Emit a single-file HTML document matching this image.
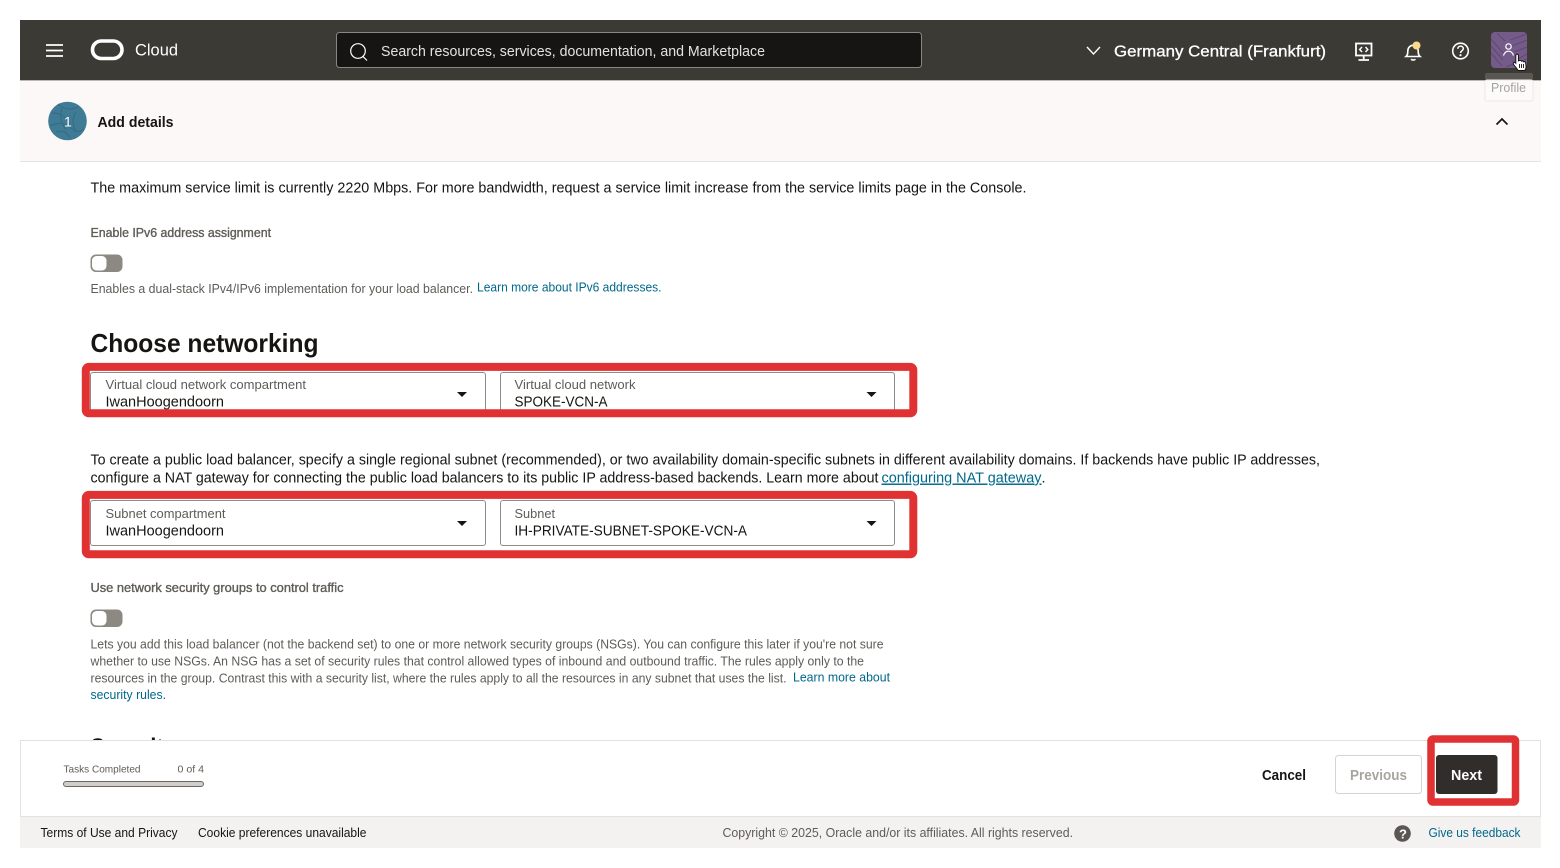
<!DOCTYPE html>
<html><head><meta charset="utf-8"><title>Add details</title>
<style>
html,body{margin:0;padding:0;background:#fff;width:1560px;height:868px;overflow:hidden}
svg{display:block}
text{font-family:"Liberation Sans",sans-serif;font-size:14px;fill:#161513}
.g{fill:#5f5c57}
.l{fill:#00688c}
.b{font-weight:700}
</style></head><body>
<svg width="1560" height="868" viewBox="0 0 1560 868" xmlns="http://www.w3.org/2000/svg">
<!-- header -->
<rect x="20" y="20" width="1521" height="60" fill="#3c3a35"/>
<rect x="20" y="80" width="1521" height="1" fill="#bdb8b3"/>
<g stroke="#fff" stroke-width="1.8"><path d="M46 45h17M46 50.500h17M46 56h17"/></g>
<rect x="92.500" y="41" width="29.500" height="17.500" rx="8.700" fill="none" stroke="#fff" stroke-width="3.600"/>
<text x="135" y="55.500" style="font-size:17px;fill:#fff" textLength="43" lengthAdjust="spacingAndGlyphs">Cloud</text>
<rect x="336.500" y="32.500" width="585" height="35" rx="3" fill="#161513" stroke="#8a8782"/>
<circle cx="358" cy="51" r="7.300" fill="none" stroke="#fff" stroke-width="1.200"/>
<path d="M363 56.500l4 4" stroke="#fff" stroke-width="1.200"/>
<text x="381" y="56" style="font-size:14.500px;fill:#e4e2df" textLength="384" lengthAdjust="spacingAndGlyphs">Search resources, services, documentation, and Marketplace</text>
<path d="M1087 47l6.500 7 6.500-7" fill="none" stroke="#fff" stroke-width="1.400"/>
<text x="1114" y="56.500" style="font-size:16px;fill:#fff;stroke:#fff;stroke-width:.3" textLength="212" lengthAdjust="spacingAndGlyphs">Germany Central (Frankfurt)</text>
<!-- console icon -->
<g fill="none" stroke="#fff" stroke-width="1.800">
<rect x="1356" y="43.500" width="15.500" height="12"/>
<path d="M1363.700 55.500v4.500M1358.500 60h10.500"/>
<path d="M1362 47l-2.300 2.500 2.300 2.500M1365.500 47l2.300 2.500-2.300 2.500" stroke-width="1.500"/>
<!-- bell -->
<path d="M1406 56.500c1.700-1.500 1.800-3 1.800-5.500 0-3.200 2.300-5.700 5.200-5.700s5.200 2.500 5.200 5.700c0 2.500.1 4 1.800 5.500z" stroke-width="1.600"/>
<path d="M1411 59.300c1.200 1 3.200 1 4.500 0" stroke-width="1.600"/>
<!-- help -->
<circle cx="1460.500" cy="51" r="7.800" stroke-width="1.600"/>
<path d="M1457.800 48.800c.2-3.500 5.500-3.500 5.500 0 0 2-2.800 2-2.800 4.200" stroke-width="1.500"/>
</g>
<circle cx="1460.500" cy="55.200" r="1.100" fill="#fff"/>
<circle cx="1416.500" cy="45.500" r="4" fill="#fbd98a"/>
<!-- profile -->
<rect x="1491" y="32" width="36" height="36" rx="4" fill="#755b8a"/>
<g fill="none" stroke="#604a74" stroke-width="1.100">
<path d="M1491 39l14 16M1491 46l12 14M1491 53l11 13M1497 33l8 8M1510 40l17-6M1512 46l15-6M1514 52l13-5M1512 62l15-8M1506 67l21-8"/>
</g>
<circle cx="1508.500" cy="46.500" r="2.700" fill="none" stroke="#fff" stroke-width="1.200"/>
<path d="M1503.500 55.500c1-3 3-4.300 5-4.300s4 1.300 5 4.300" fill="none" stroke="#fff" stroke-width="1.200"/>
<!-- tooltip top over header -->
<rect x="1485" y="73" width="48" height="7" rx="2" fill="#5a5753"/>
<!-- cursor -->
<path d="M1515.800 55.500c0-1.900 2.600-1.900 2.600 0v5.300l1.500-.4c1-.2 1.500.3 1.600.8.800-.4 1.800-.2 2 .6.900-.4 2-.1 2.100 1l.5 4c0 1.600-.6 2.600-1.300 3.700h-6.500l-4.700-6c-1-1.500.8-2.800 2.200-1.300z" fill="#fff" stroke="#161513" stroke-width="1"/>
<path d="M1519.500 64v4M1521.500 64v4M1523.500 64v4" stroke="#161513" stroke-width=".9"/>
<!-- step band -->
<rect x="20" y="81" width="1521" height="80" fill="#fcf8f7"/>
<rect x="1485" y="80" width="48" height="21" rx="2" fill="#fcfbfa" stroke="#ebe8e6"/>
<text x="1491" y="92" style="font-size:12.500px;fill:#a5a29e" textLength="35" lengthAdjust="spacingAndGlyphs">Profile</text>
<rect x="20" y="161" width="1521" height="1" fill="#e6e3e1"/>
<circle cx="67.500" cy="121" r="19.300" fill="#3f7b94"/>
<g fill="none" stroke="#346b83" stroke-width="1">
<path d="M52 113c8 0 14 3 18 12M58 104c6 6 14 6 20 3M50 126c6-3 12-4 18 0s10 8 16 3M62 108c-2 8-2 14 4 22M76 112c-4 6-4 12 0 20M56 132c6-2 10-1 14 6"/>
</g>
<text x="64" y="126.500" style="font-size:14px;fill:#fff">1</text>
<text x="97.500" y="127" class="b" style="font-size:14.500px" textLength="76" lengthAdjust="spacingAndGlyphs">Add details</text>
<path d="M1496.500 124.500l5.500-5.500 5.500 5.500" fill="none" stroke="#161513" stroke-width="1.700"/>

<!-- content -->
<text x="90.500" y="192.500" style="font-size:14.500px" textLength="936" lengthAdjust="spacingAndGlyphs">The maximum service limit is currently 2220 Mbps. For more bandwidth, request a service limit increase from the service limits page in the Console.</text>
<text x="90.500" y="237" class="g" style="font-size:12.500px;stroke:#5f5c57;stroke-width:.35" textLength="180.500" lengthAdjust="spacingAndGlyphs">Enable IPv6 address assignment</text>
<rect x="91" y="255" width="31" height="16.500" rx="5" fill="#8c8882" stroke="#8c8882"/>
<rect x="92" y="256" width="14.500" height="14.500" rx="4.500" fill="#fff"/>
<text x="90.500" y="293" class="g" style="font-size:12.500px" textLength="382.500" lengthAdjust="spacingAndGlyphs">Enables a dual-stack IPv4/IPv6 implementation for your load balancer.</text>
<text x="477" y="291.500" class="l" style="font-size:12.500px" textLength="184.500" lengthAdjust="spacingAndGlyphs">Learn more about IPv6 addresses.</text>
<text x="90.500" y="352" class="b" style="font-size:26px" textLength="228" lengthAdjust="spacingAndGlyphs">Choose networking</text>

<!-- first row fields -->
<g fill="#fff" stroke="#8f8c87">
<path d="M90.500 413V375a2.500 2.500 0 0 1 2.500-2.500H483a2.500 2.500 0 0 1 2.500 2.500V413"/>
<path d="M500.500 413V375a2.500 2.500 0 0 1 2.500-2.500H892a2.500 2.500 0 0 1 2.500 2.500V413"/>
</g>
<text x="105.500" y="389" class="g" style="font-size:12.500px" textLength="200.500" lengthAdjust="spacingAndGlyphs">Virtual cloud network compartment</text>
<text x="105.500" y="406.500" style="font-size:14.500px" textLength="118.500" lengthAdjust="spacingAndGlyphs">IwanHoogendoorn</text>
<path d="M457 392h10l-5 5z" fill="#161513"/>
<text x="514.500" y="389" class="g" style="font-size:12.500px" textLength="121" lengthAdjust="spacingAndGlyphs">Virtual cloud network</text>
<text x="514.500" y="406.500" style="font-size:14.500px" textLength="93" lengthAdjust="spacingAndGlyphs">SPOKE-VCN-A</text>
<path d="M866.500 392h10l-5 5z" fill="#161513"/>
<rect x="85.800" y="366.900" width="827.500" height="46.400" rx="3" fill="none" stroke="#e03232" stroke-width="8"/>

<text x="90.500" y="464.500" style="font-size:14.500px" textLength="1229.500" lengthAdjust="spacingAndGlyphs">To create a public load balancer, specify a single regional subnet (recommended), or two availability domain-specific subnets in different availability domains. If backends have public IP addresses,</text>
<text x="90.500" y="482.500" style="font-size:14.500px" textLength="788" lengthAdjust="spacingAndGlyphs">configure a NAT gateway for connecting the public load balancers to its public IP address-based backends. Learn more about</text>
<text x="881.500" y="482.500" class="l" style="font-size:14.500px;text-decoration:underline" textLength="160" lengthAdjust="spacingAndGlyphs">configuring NAT gateway</text>
<text x="1041.500" y="482.500" style="font-size:14.500px">.</text>

<!-- second row fields -->
<g fill="#fff" stroke="#8f8c87">
<rect x="90.500" y="500.500" width="395" height="45" rx="2.500"/>
<rect x="500.500" y="500.500" width="394" height="45" rx="2.500"/>
</g>
<text x="105.500" y="518" class="g" style="font-size:12.500px" textLength="120" lengthAdjust="spacingAndGlyphs">Subnet compartment</text>
<text x="105.500" y="535.500" style="font-size:14.500px" textLength="118.500" lengthAdjust="spacingAndGlyphs">IwanHoogendoorn</text>
<path d="M457 521h10l-5 5z" fill="#161513"/>
<text x="514.500" y="518" class="g" style="font-size:12.500px" textLength="40.500" lengthAdjust="spacingAndGlyphs">Subnet</text>
<text x="514.500" y="535.500" style="font-size:14.500px" textLength="232.500" lengthAdjust="spacingAndGlyphs">IH-PRIVATE-SUBNET-SPOKE-VCN-A</text>
<path d="M866.500 521h10l-5 5z" fill="#161513"/>
<rect x="85.800" y="494.900" width="827.500" height="59.400" rx="3" fill="none" stroke="#e03232" stroke-width="8"/>

<text x="90.500" y="592" class="g" style="font-size:12.500px;stroke:#5f5c57;stroke-width:.35" textLength="253" lengthAdjust="spacingAndGlyphs">Use network security groups to control traffic</text>
<rect x="91" y="610" width="31" height="16.500" rx="5" fill="#8c8882" stroke="#8c8882"/>
<rect x="92" y="611" width="14.500" height="14.500" rx="4.500" fill="#fff"/>
<text x="90.500" y="648.500" class="g" style="font-size:12.500px" textLength="793" lengthAdjust="spacingAndGlyphs">Lets you add this load balancer (not the backend set) to one or more network security groups (NSGs). You can configure this later if you're not sure</text>
<text x="90.500" y="665.500" class="g" style="font-size:12.500px" textLength="773.500" lengthAdjust="spacingAndGlyphs">whether to use NSGs. An NSG has a set of security rules that control allowed types of inbound and outbound traffic. The rules apply only to the</text>
<text x="90.500" y="682.500" class="g" style="font-size:12.500px" textLength="696" lengthAdjust="spacingAndGlyphs">resources in the group. Contrast this with a security list, where the rules apply to all the resources in any subnet that uses the list.</text>
<text x="793" y="681.500" class="l" style="font-size:12.500px" textLength="97" lengthAdjust="spacingAndGlyphs">Learn more about</text>
<text x="90.500" y="699" class="l" style="font-size:12.500px" textLength="75.500" lengthAdjust="spacingAndGlyphs">security rules.</text>
<text x="90.500" y="756.500" class="b" style="font-size:26px" textLength="85" lengthAdjust="spacingAndGlyphs">Security</text>

<!-- footer train -->
<rect x="20.500" y="740.500" width="1520" height="76" fill="#fff" stroke="#e4e2df"/>
<text x="63.500" y="772.500" class="g" style="font-size:10.500px" textLength="77" lengthAdjust="spacingAndGlyphs">Tasks Completed</text>
<text x="177.500" y="772.500" class="g" style="font-size:10.500px" textLength="26.500" lengthAdjust="spacingAndGlyphs">0 of 4</text>
<rect x="63.500" y="781.500" width="140" height="5" rx="2.500" fill="#d0cdca" stroke="#6b6863"/>
<text x="1262" y="780" class="b" style="font-size:14.500px" textLength="44" lengthAdjust="spacingAndGlyphs">Cancel</text>
<rect x="1335.500" y="755.500" width="86" height="38" rx="3" fill="#fff" stroke="#d6d3d0"/>
<text x="1350" y="780" class="b" style="font-size:14.500px;fill:#a8a5a1" textLength="57" lengthAdjust="spacingAndGlyphs">Previous</text>
<rect x="1436" y="755" width="61.500" height="39" rx="3" fill="#312d2a"/>
<text x="1451" y="780" class="b" style="font-size:14.500px;fill:#fff" textLength="31" lengthAdjust="spacingAndGlyphs">Next</text>
<rect x="1431" y="739" width="84.500" height="63" rx="2" fill="none" stroke="#e03232" stroke-width="7.500"/>

<!-- page footer -->
<rect x="20" y="817" width="1521" height="31" fill="#f4f2f0"/>
<text x="40.500" y="837" style="font-size:12.500px" textLength="137" lengthAdjust="spacingAndGlyphs">Terms of Use and Privacy</text>
<text x="198" y="837" style="font-size:12.500px" textLength="168.500" lengthAdjust="spacingAndGlyphs">Cookie preferences unavailable</text>
<text x="722.500" y="837" class="g" style="font-size:12.500px" textLength="350.500" lengthAdjust="spacingAndGlyphs">Copyright © 2025, Oracle and/or its affiliates. All rights reserved.</text>
<circle cx="1402.500" cy="833.500" r="8.300" fill="#5a5753"/>
<text x="1399" y="838.500" class="b" style="font-size:13px;fill:#fff">?</text>
<text x="1428.500" y="837" class="l" style="font-size:12.500px" textLength="92" lengthAdjust="spacingAndGlyphs">Give us feedback</text>
</svg>
</body></html>
